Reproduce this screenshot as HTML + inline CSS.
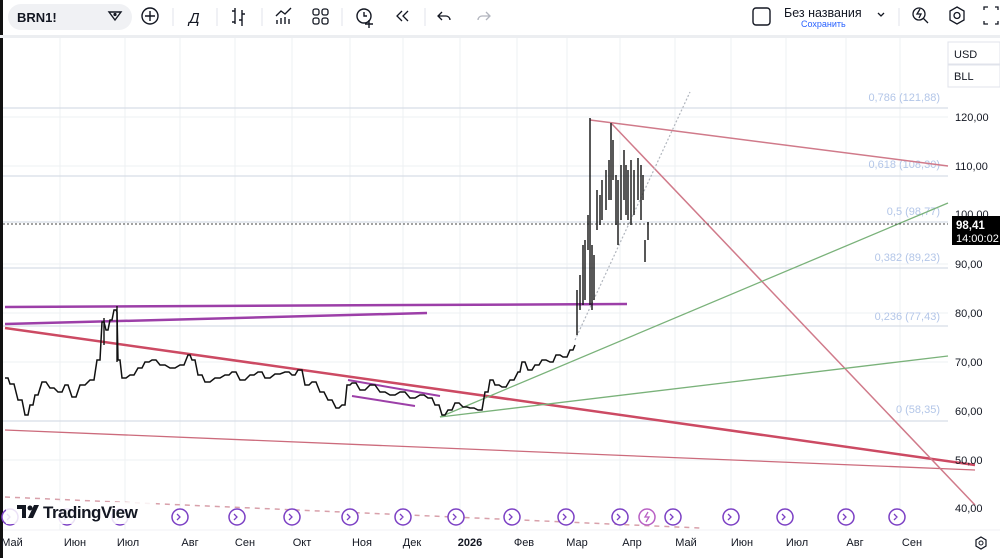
<!DOCTYPE html>
<html><head><meta charset="utf-8"><style>
body{margin:0;width:1000px;height:558px;overflow:hidden;background:#fff;font-family:"Liberation Sans",sans-serif;}
</style></head><body>
<svg width="1000" height="558" xmlns="http://www.w3.org/2000/svg" style="position:absolute;left:0;top:0">
<rect width="1000" height="558" fill="#fff"/>
<rect x="0" y="0" width="3" height="558" fill="#111"/>
<rect x="0" y="35" width="1000" height="3" fill="#eceef1"/>
<rect x="8" y="4" width="124" height="26" rx="13" fill="#f0f1f4"/>
<text x="17" y="22" font-size="13" font-weight="bold" fill="#131722">BRN1!</text>
<path d="M109 12 h12 l-6 8 z" fill="none" stroke="#131722" stroke-width="1.4"/><circle cx="115" cy="14.5" r="1.6" fill="#131722"/>
<circle cx="150" cy="16" r="8" fill="none" stroke="#131722" stroke-width="1.4"/><path d="M150 11v10M145 16h10" stroke="#131722" stroke-width="1.4"/>
<line x1="173" y1="8" x2="173" y2="26" stroke="#e0e3eb"/>
<text x="189" y="23" font-size="15" font-style="italic" fill="#131722">Д</text>
<line x1="217" y1="8" x2="217" y2="26" stroke="#e0e3eb"/>
<path d="M235 8v16M232 11h3M235 22h-3M242 10v16M242 14h3M242 20h-3" stroke="#131722" stroke-width="1.4" fill="none"/>
<line x1="262" y1="8" x2="262" y2="26" stroke="#e0e3eb"/>
<path d="M277 24v-4M281 24v-6M285 24v-7M289 24v-5M276 16l5-5 4 3 6-6" stroke="#131722" stroke-width="1.4" fill="none"/>
<rect x="313" y="9" width="6" height="6" rx="2" fill="none" stroke="#131722" stroke-width="1.3"/><rect x="322" y="9" width="6" height="6" rx="2" fill="none" stroke="#131722" stroke-width="1.3"/><rect x="313" y="18" width="6" height="6" rx="2" fill="none" stroke="#131722" stroke-width="1.3"/><rect x="322" y="18" width="6" height="6" rx="2" fill="none" stroke="#131722" stroke-width="1.3"/>
<line x1="342" y1="8" x2="342" y2="26" stroke="#e0e3eb"/>
<circle cx="364" cy="16" r="7" fill="none" stroke="#131722" stroke-width="1.4"/><path d="M364 12v4h3M369 20v8M365 24h8" stroke="#131722" stroke-width="1.4" fill="none"/>
<path d="M402 11l-5 5 5 5M408 11l-5 5 5 5" stroke="#131722" stroke-width="1.3" fill="none"/>
<line x1="425" y1="8" x2="425" y2="26" stroke="#e0e3eb"/>
<path d="M442 12l-4 4 4 4M438 16h8a4 4 0 0 1 4 4" stroke="#131722" stroke-width="1.3" fill="none"/>
<path d="M486 12l4 4-4 4M490 16h-8a4 4 0 0 0-4 4" stroke="#b2b5be" stroke-width="1.3" fill="none"/>
<rect x="753" y="8" width="17" height="17" rx="3" fill="none" stroke="#131722" stroke-width="1.4"/>
<text x="784" y="17" font-size="12.5" fill="#131722">Без названия</text>
<text x="801" y="27" font-size="9" fill="#2962ff">Сохранить</text>
<path d="M878 13l3 3 3-3" stroke="#131722" stroke-width="1.3" fill="none"/>
<line x1="899" y1="8" x2="899" y2="26" stroke="#e0e3eb"/>
<circle cx="919" cy="14" r="6" fill="none" stroke="#131722" stroke-width="1.3"/><path d="M923 18l5 5M920 9l-3 5h4l-2 4" stroke="#131722" stroke-width="1.3" fill="none"/>
<path d="M957 7l7 4v9l-7 4-7-4v-9z" fill="none" stroke="#131722" stroke-width="1.3"/><circle cx="957" cy="15.5" r="3" fill="none" stroke="#131722" stroke-width="1.3"/>
<path d="M984 10v-3h4M995 7h3v3M984 21v3h4M995 24h3v-3" stroke="#131722" stroke-width="1.3" fill="none"/>
<g stroke="#eef0f3" stroke-width="1">
<line x1="60" y1="38" x2="60" y2="530"/><line x1="125" y1="38" x2="125" y2="530"/><line x1="180" y1="38" x2="180" y2="530"/><line x1="235" y1="38" x2="235" y2="530"/><line x1="292" y1="38" x2="292" y2="530"/><line x1="350" y1="38" x2="350" y2="530"/><line x1="403" y1="38" x2="403" y2="530"/><line x1="460" y1="38" x2="460" y2="530"/><line x1="517" y1="38" x2="517" y2="530"/><line x1="567" y1="38" x2="567" y2="530"/><line x1="620" y1="38" x2="620" y2="530"/><line x1="675" y1="38" x2="675" y2="530"/><line x1="731" y1="38" x2="731" y2="530"/><line x1="786" y1="38" x2="786" y2="530"/><line x1="846" y1="38" x2="846" y2="530"/><line x1="900" y1="38" x2="900" y2="530"/>
<line x1="3" y1="117" x2="948" y2="117"/><line x1="3" y1="166" x2="948" y2="166"/><line x1="3" y1="264" x2="948" y2="264"/><line x1="3" y1="313" x2="948" y2="313"/><line x1="3" y1="362" x2="948" y2="362"/><line x1="3" y1="460" x2="948" y2="460"/>
</g>
<g stroke="#d8dde6" stroke-width="1.3">
<line x1="3" y1="108" x2="948" y2="108"/><line x1="3" y1="176" x2="948" y2="176"/><line x1="3" y1="222" x2="948" y2="222"/><line x1="3" y1="268" x2="948" y2="268"/><line x1="3" y1="326" x2="948" y2="326"/><line x1="3" y1="421" x2="948" y2="421"/>
</g>
<g font-size="11" fill="#b3c6e8" text-anchor="end">
<text x="940" y="101">0,786 (121,88)</text><text x="940" y="168">0,618 (108,30)</text><text x="940" y="215">0,5 (98,77)</text><text x="940" y="261">0,382 (89,23)</text><text x="940" y="320">0,236 (77,43)</text><text x="940" y="413">0 (58,35)</text>
</g>
<line x1="5" y1="307" x2="627" y2="304" stroke="#9c3fa8" stroke-width="2.5"/>
<line x1="5" y1="324" x2="427" y2="313" stroke="#9c3fa8" stroke-width="2.5"/>
<line x1="348" y1="380" x2="440" y2="396" stroke="#9c3fa8" stroke-width="2"/>
<line x1="352" y1="396" x2="415" y2="406" stroke="#9c3fa8" stroke-width="2"/>
<line x1="5" y1="328" x2="975" y2="465" stroke="#cc4a63" stroke-width="2.5"/>
<line x1="5" y1="430" x2="975" y2="470" stroke="#cc6b7c" stroke-width="1.3"/>
<line x1="590" y1="120" x2="948" y2="166" stroke="#d07a8a" stroke-width="1.5"/>
<line x1="612" y1="124" x2="975" y2="505" stroke="#d07a8a" stroke-width="1.5"/>
<line x1="440" y1="417" x2="948" y2="203" stroke="#7ab27a" stroke-width="1.3"/>
<line x1="440" y1="417" x2="948" y2="356" stroke="#7ab27a" stroke-width="1.3"/>
<line x1="575" y1="340" x2="690" y2="92" stroke="#b0b5bd" stroke-width="1.2" stroke-dasharray="2,2"/>
<line x1="5" y1="497" x2="700" y2="528" stroke="#d8a0aa" stroke-width="1.5" stroke-dasharray="5,5"/>
<line x1="3" y1="224" x2="948" y2="224" stroke="#444" stroke-width="1" stroke-dasharray="2,2"/>
<polyline fill="none" stroke="#111" stroke-width="1.5" points="5,378 8,378 10,384 14,384 18,400 22,400 25,415 28,415 30,405 33,405 35,395 38,395 42,382 46,382 50,388 54,388 58,392 62,392 65,385 68,385 72,397 76,397 80,385 85,385 90,380 94,380 97,360 100,360 102,322 104,322 106,330 108,330 110,320 112,320 114,310 116,310 117,312 118,360 120,360 122,378 126,378 130,375 134,375 138,368 142,368 145,362 149,362 152,360 156,360 160,365 165,365 170,368 175,368 180,365 184,365 188,355 190,355 192,360 195,360 198,375 202,375 205,382 210,382 215,378 220,378 225,375 229,375 232,372 236,372 240,380 245,380 250,375 254,375 258,372 262,372 265,378 270,378 275,374 280,374 285,372 289,372 292,375 295,375 298,370 302,370 305,385 309,385 312,382 316,382 320,392 324,392 328,400 332,400 336,408 339,408 342,405 345,405 347,385 350,385 352,383 356,383 360,390 365,390 370,385 375,385 380,392 385,392 390,395 395,395 400,392 405,392 410,398 415,398 420,395 424,395 428,398 432,398 435,405 439,405 442,415 445,415 448,410 452,410 455,403 459,403 463,407 467,407 470,408 474,408 478,410 482,410 485,392 488,392 490,380 493,380 495,385 499,385 502,387 506,387 510,380 514,380 518,372 520,372 522,362 525,362 528,370 532,370 535,365 539,365 542,360 546,360 550,362 553,362 556,355 560,355 563,357 567,357 570,350 573,350 575,345"/>
<g stroke="#111" stroke-width="1.4">
<line x1="117" y1="306" x2="117" y2="362"/><line x1="104" y1="318" x2="104" y2="345"/>
<line x1="577" y1="290" x2="577" y2="335"/><line x1="580" y1="275" x2="580" y2="310"/><line x1="583" y1="245" x2="583" y2="305"/><line x1="585" y1="240" x2="585" y2="300"/><line x1="588" y1="215" x2="588" y2="250"/><line x1="590" y1="118" x2="590" y2="305"/><line x1="592" y1="245" x2="592" y2="310"/><line x1="594" y1="255" x2="594" y2="300"/><line x1="597" y1="190" x2="597" y2="230"/><line x1="600" y1="195" x2="600" y2="225"/><line x1="602" y1="180" x2="602" y2="220"/><line x1="606" y1="170" x2="606" y2="210"/><line x1="609" y1="160" x2="609" y2="200"/><line x1="611" y1="123" x2="611" y2="200"/><line x1="613" y1="140" x2="613" y2="180"/><line x1="616" y1="175" x2="616" y2="225"/><line x1="618" y1="180" x2="618" y2="245"/><line x1="621" y1="165" x2="621" y2="220"/><line x1="624" y1="150" x2="624" y2="200"/><line x1="626" y1="165" x2="626" y2="215"/><line x1="628" y1="170" x2="628" y2="220"/><line x1="631" y1="160" x2="631" y2="225"/><line x1="634" y1="170" x2="634" y2="215"/><line x1="638" y1="158" x2="638" y2="200"/><line x1="641" y1="165" x2="641" y2="220"/><line x1="643" y1="175" x2="643" y2="200"/><line x1="645" y1="240" x2="645" y2="262"/><line x1="648" y1="222" x2="648" y2="240"/>
</g>
<rect x="948" y="42" width="52" height="22" fill="#fff" stroke="#e0e3eb"/><text x="954" y="58" font-size="11" fill="#131722">USD</text>
<rect x="948" y="65" width="52" height="22" fill="#fff" stroke="#e0e3eb"/><text x="954" y="80" font-size="11" fill="#131722">BLL</text>
<g font-size="11" fill="#131722">
<text x="955" y="121">120,00</text><text x="955" y="170">110,00</text><text x="955" y="218">100,00</text><text x="955" y="268">90,00</text><text x="955" y="317">80,00</text><text x="955" y="366">70,00</text><text x="955" y="415">60,00</text><text x="955" y="464">50,00</text><text x="955" y="512">40,00</text>
</g>
<rect x="952" y="216" width="48" height="29" fill="#000"/>
<text x="956" y="229" font-size="11.5" font-weight="bold" fill="#fff">98,41</text>
<text x="956" y="242" font-size="11" fill="#fff">14:00:02</text>
<g fill="#fff" stroke="#7b3fc4" stroke-width="1.5">
<circle cx="10" cy="517" r="8"/><circle cx="67" cy="517" r="8"/><circle cx="120" cy="517" r="8"/><circle cx="180" cy="517" r="8"/><circle cx="237" cy="517" r="8"/><circle cx="292" cy="517" r="8"/><circle cx="350" cy="517" r="8"/><circle cx="403" cy="517" r="8"/><circle cx="456" cy="517" r="8"/><circle cx="512" cy="517" r="8"/><circle cx="566" cy="517" r="8"/><circle cx="620" cy="517" r="8"/><circle cx="647" cy="517" r="8" stroke="#b85fc4"/><circle cx="673" cy="517" r="8"/><circle cx="731" cy="517" r="8"/><circle cx="785" cy="517" r="8"/><circle cx="846" cy="517" r="8"/><circle cx="897" cy="517" r="8"/>
</g>
<g stroke="#7b3fc4" stroke-width="1.3" fill="none">
<path d="M7 514l3 3-3 3M64 514l3 3-3 3M117 514l3 3-3 3M177 514l3 3-3 3M234 514l3 3-3 3M289 514l3 3-3 3M347 514l3 3-3 3M400 514l3 3-3 3M453 514l3 3-3 3M509 514l3 3-3 3M563 514l3 3-3 3M617 514l3 3-3 3M670 514l3 3-3 3M728 514l3 3-3 3M782 514l3 3-3 3M843 514l3 3-3 3M894 514l3 3-3 3"/>
<path d="M648 512l-3 5h4l-3 5" stroke="#b85fc4"/>
</g>
<rect x="6" y="502" width="150" height="22" fill="#fff" opacity="0.85"/>
<path d="M17 505h9v13h-4v-9h-5z" fill="#131722"/><circle cx="30" cy="508" r="2.5" fill="#131722"/><path d="M34 505h5l-6 13h-5z" fill="#131722"/>
<text x="43" y="518" font-size="17" font-weight="bold" fill="#131722" letter-spacing="-0.5">TradingView</text>
<line x1="3" y1="530" x2="1000" y2="530" stroke="#f0f2f5"/>
<g font-size="11" fill="#131722" text-anchor="middle">
<text x="12" y="546">Май</text><text x="75" y="546">Июн</text><text x="128" y="546">Июл</text><text x="190" y="546">Авг</text><text x="245" y="546">Сен</text><text x="302" y="546">Окт</text><text x="362" y="546">Ноя</text><text x="412" y="546">Дек</text><text x="470" y="546" font-weight="bold">2026</text><text x="524" y="546">Фев</text><text x="577" y="546">Мар</text><text x="632" y="546">Апр</text><text x="686" y="546">Май</text><text x="742" y="546">Июн</text><text x="797" y="546">Июл</text><text x="855" y="546">Авг</text><text x="912" y="546">Сен</text>
</g>
<path d="M981 537l5 3v6l-5 3-5-3v-6z" fill="none" stroke="#131722" stroke-width="1.2"/><circle cx="981" cy="543" r="2" fill="none" stroke="#131722"/>
</svg>
</body></html>
